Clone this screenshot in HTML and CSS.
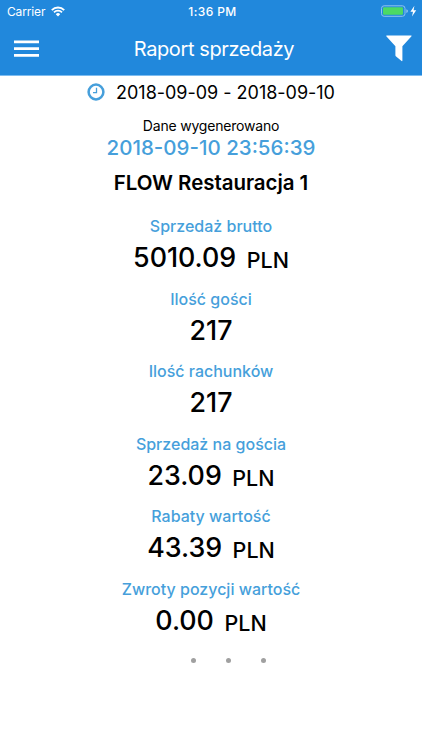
FILE: index.html
```
<!DOCTYPE html>
<html lang="pl">

<head>
    <meta charset="UTF-8">
    <meta name="viewport" content="width=device-width, initial-scale=1.0">
    <title>Raport sprzedaży</title>
    <link rel="stylesheet" href="styles.css">
</head>

<body>
    <header class="header">
        <div class="status-bar">
            <div class="status-left">
                <span class="carrier">Carrier</span>
                <svg class="wifi" width="14" height="11" viewBox="0 0 14 11">
                    <path d="M0.8 4.1 A8.8 8.8 0 0 1 13.2 4.1" fill="none" stroke="#fff" stroke-width="1.9" />
                    <path d="M3 6.4 A5.6 5.6 0 0 1 11 6.4" fill="none" stroke="#fff" stroke-width="1.8" />
                    <path d="M4.8 8.2 A3 3 0 0 1 9.2 8.2 L7 10.4 Z" fill="#fff" />
                </svg>
            </div>
            <span class="time">1:36 PM</span>
            <div class="status-right">
                <svg width="37" height="13" viewBox="0 0 37 13">
                    <rect x="0.5" y="0.8" width="23.5" height="10.5" rx="2.6" fill="none" stroke="#8fc3ef" />
                    <rect x="2" y="2.3" width="20" height="7.5" rx="1" fill="#4cd964" />
                    <path d="M25.3 4.2 Q27 4.6 27 6.1 Q27 7.6 25.3 8 Z" fill="#8fc3ef" />
                    <path d="M33.4 0.8 L29.4 6.8 H32 L31 11.4 L35.2 5.2 H32.6 Z" fill="#fff" />
                </svg>
            </div>
        </div>
        <nav class="nav-bar">
            <svg class="menu-icon" width="25" height="18" viewBox="0 0 25 18">
                <path d="M0 1.9 H25 M0 8.7 H25 M0 15.4 H25" stroke="#fff" stroke-width="2.8" />
            </svg>
            <h1 class="title">Raport sprzedaży</h1>
            <svg class="filter-icon" width="26" height="27" viewBox="0 0 26 27">
                <path d="M0.6 0.5 H25.2 Q25.9 0.5 25.5 1.3 L16.4 11.3 V25.6 Q16.3 26.4 15.6 26 L9.8 21.2 Q9.4 20.8 9.4 20.3 V11.3 L0.3 1.3 Q0 0.5 0.6 0.5 Z" fill="#fff" />
            </svg>
        </nav>
    </header>

    <main class="report">
        <div class="date-range">
            <svg width="18" height="18" viewBox="0 0 18 18">
                <circle cx="9" cy="9" r="7.4" fill="none" stroke="#469fdb" stroke-width="2.5" />
                <path d="M9.5 4.7 V9.7 H6" fill="none" stroke="#469fdb" stroke-width="1.3" />
            </svg>
            <span class="dates">2018-09-09 - 2018-09-10</span>
        </div>
        <p class="generated">Dane wygenerowano</p>
        <p class="generated-time">2018-09-10 23:56:39</p>
        <h2 class="place">FLOW Restauracja 1</h2>

        <div class="item">
            <p class="label">Sprzedaż brutto</p>
            <p class="value">5010.09<span class="currency">PLN</span></p>
        </div>
        <div class="item">
            <p class="label">Ilość gości</p>
            <p class="value">217</p>
        </div>
        <div class="item">
            <p class="label">Ilość rachunków</p>
            <p class="value">217</p>
        </div>
        <div class="item">
            <p class="label">Sprzedaż na gościa</p>
            <p class="value">23.09<span class="currency">PLN</span></p>
        </div>
        <div class="item">
            <p class="label">Rabaty wartość</p>
            <p class="value">43.39<span class="currency">PLN</span></p>
        </div>
        <div class="item">
            <p class="label">Zwroty pozycji wartość</p>
            <p class="value">0.00<span class="currency">PLN</span></p>
        </div>

        <div class="dots">
            <span class="dot active"></span>
            <span class="dot"></span>
            <span class="dot"></span>
            <span class="dot"></span>
        </div>
    </main>
</body>

</html>
```
FILE: styles.css
```
body {
    background-color: #fff;
    color: #000;
    font-family: Inter, "Liberation Sans", sans-serif;
    margin: 0;
    padding: 0;
}

p,
h1,
h2 {
    margin: 0;
}

.header {
    background-color: #2188dc;
    border-bottom: 1px solid #7dbcf0;
    box-sizing: border-box;
    color: #fff;
    height: 76px;
}

.status-bar {
    display: grid;
    grid-template-columns: 1fr auto 1fr;
    align-items: center;
    height: 22px;
    padding: 0 4px 0 7px;
}

.status-left {
    display: flex;
    align-items: center;
    gap: 6px;
}

.carrier {
    font-size: 12px;
    letter-spacing: -0.15px;
}

.time {
    font-size: 12px;
    font-weight: 500;
    letter-spacing: 0.4px;
}

.status-right {
    display: flex;
    justify-content: flex-end;
}

.nav-bar {
    display: flex;
    align-items: center;
    justify-content: space-between;
    height: 53px;
    padding: 0 10px 0 14px;
}

.title {
    font-size: 20px;
    font-weight: 400;
    letter-spacing: -0.4px;
    padding-left: 3px;
}

.report {
    text-align: center;
}

.date-range {
    display: flex;
    align-items: center;
    justify-content: center;
    gap: 11px;
    height: 32px;
}

.dates {
    font-size: 18px;
    letter-spacing: -0.02px;
}

.generated {
    font-size: 14px;
    letter-spacing: -0.2px;
    line-height: 20px;
    margin-top: 8px;
}

.generated-time {
    color: #469fdb;
    font-size: 20.5px;
    font-weight: 500;
    line-height: 24px;
}

.place {
    font-size: 20.5px;
    font-weight: 600;
    letter-spacing: -0.05px;
    line-height: 30px;
    margin: 8px 0 14px;
}

.item {
    height: 72.6px;
}

.label {
    color: #469fdb;
    font-size: 16px;
    font-weight: 500;
    line-height: 28px;
}

.value {
    font-size: 26.8px;
    font-weight: 500;
    line-height: 34px;
}

.currency {
    font-size: 21.5px;
    margin-left: 10.5px;
    position: relative;
    top: 1px;
}

.dots {
    display: flex;
    justify-content: center;
    gap: 29.7px;
    padding-top: 10px;
}

.dot {
    width: 5px;
    height: 5px;
    border-radius: 50%;
    background-color: #a0a0a0;
}

.dot.active {
    background-color: #fff;
}
```
